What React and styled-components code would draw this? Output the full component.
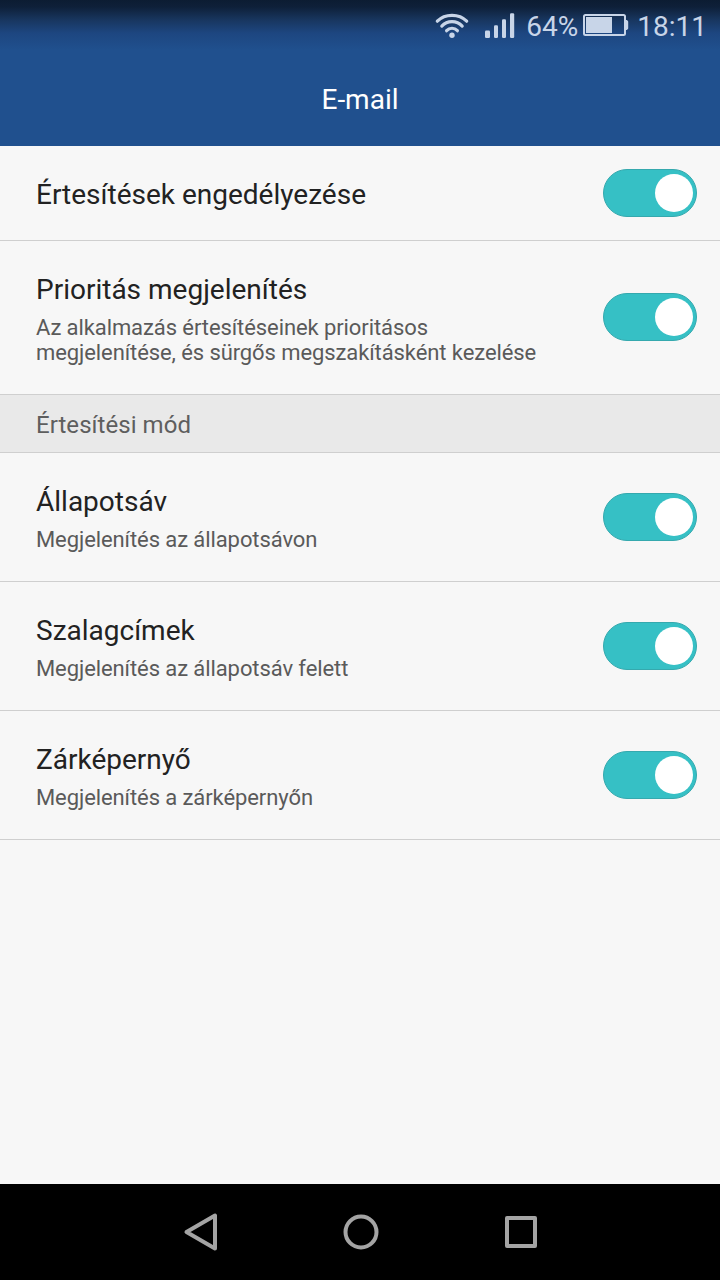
import React from 'react'
import styled, { createGlobalStyle } from 'styled-components'

const GlobalStyle = createGlobalStyle`
  * {
    box-sizing: border-box;
  }

  body {
    margin: 0;
    background: #f7f7f7;
    font-family: Roboto, 'Noto Sans', sans-serif;
  }
`

const Screen = styled.div`
  display: flex;
  flex-direction: column;
  width: 720px;
  height: 1280px;
  overflow: hidden;
  background: #f7f7f7;
`

const Header = styled.header`
  height: 146px;
  background: linear-gradient(
    to bottom,
    #0c1c32 0,
    #0e2039 7px,
    #18365f 20px,
    #1d4680 33px,
    #20508e 50px
  );
`

const StatusBar = styled.div`
  display: flex;
  align-items: center;
  justify-content: flex-end;
  height: 50px;
  padding: 4px 13px 0 0;
  color: #c8d5e8;
  font-size: 28px;
  line-height: 50px;
`

const StatusIcon = styled.svg`
  flex: none;
  margin-right: ${({ $gap }) => $gap}px;
  margin-bottom: ${({ $lift = 2 }) => $lift}px;
`

const Percent = styled.span`
  width: 57px;
`

const Title = styled.h1`
  margin: 0;
  padding-top: 1px;
  color: #fff;
  font-size: 28px;
  font-weight: 400;
  line-height: 98px;
  text-align: center;
`

const List = styled.main`
  flex: 1;
`

const Row = styled.div`
  display: flex;
  align-items: center;
  justify-content: space-between;
  height: ${({ $height }) => $height}px;
  padding: 0 23px 0 36px;
  border-bottom: 1px solid #cfcfcf;
`

const Texts = styled.div`
  padding-top: ${({ $single }) => ($single ? 4 : 2)}px;
`

const Label = styled.div`
  color: #222;
  font-size: 28px;
  line-height: 34px;
`

const Summary = styled.div`
  margin-top: 8px;
  color: #5a5a5a;
  font-size: 22px;
  letter-spacing: -0.09px;
  line-height: 25px;
  white-space: pre-line;
`

const SectionTitle = styled.div`
  height: 58px;
  padding: 2px 36px 0;
  background: #e9e9e9;
  border-bottom: 1px solid #cfcfcf;
  color: #5e5e5e;
  font-size: 24px;
  letter-spacing: 0.05px;
  line-height: 56px;
`

const Toggle = styled.div`
  display: flex;
  align-items: center;
  justify-content: flex-end;
  flex: none;
  width: 94px;
  height: 48px;
  margin-bottom: 1px;
  padding-right: 3px;
  border: 1px solid #35a9ae;
  border-radius: 24px;
  background: #36c0c5;
`

const Knob = styled.div`
  width: 38px;
  height: 38px;
  border-radius: 50%;
  background: #fff;
`

const NavBar = styled.nav`
  height: 96px;
  background: #000;
`

function SettingRow({ height, label, summary }) {
  return (
    <Row $height={height}>
      <Texts $single={!summary}>
        <Label>{label}</Label>
        {summary && <Summary>{summary}</Summary>}
      </Texts>
      <Toggle>
        <Knob />
      </Toggle>
    </Row>
  )
}

export default function App() {
  return (
    <Screen>
      <GlobalStyle />
      <Header>
        <StatusBar>
          {/* wifi */}
          <StatusIcon $gap={15} width="36" height="26" viewBox="0 0 36 26" fill="none" stroke="#c8d5e8" strokeWidth="3.2" strokeLinecap="round">
            <path d="M3.300 8.200C11 0.300 25 0.300 32.700 8.200M7.800 13.100c5.500-6 14.900-6 20.400 0M12.600 17.700c3-3.300 7.800-3.300 10.800 0" />
            <circle cx="18" cy="22.300" r="2.700" fill="#c8d5e8" stroke="none" />
          </StatusIcon>

          {/* signal */}
          <StatusIcon $gap={11} width="30" height="26" viewBox="0 0 30 26" fill="#c8d5e8">
            <rect x="0" y="17.500" width="5" height="7.500" rx="1.200" />
            <rect x="9" y="12.200" width="4" height="12.800" rx="1.200" />
            <rect x="17" y="6.200" width="4" height="18.800" rx="1.200" />
            <rect x="25" y="0.200" width="4.200" height="24.800" rx="1.200" />
          </StatusIcon>

          <Percent>64%</Percent>

          {/* battery */}
          <StatusIcon $gap={8} $lift={4} width="46" height="22" viewBox="0 0 46 22" fill="#c8d5e8">
            <rect x="1" y="1" width="41" height="20" rx="1.500" fill="none" stroke="#c8d5e8" strokeWidth="2" />
            <path d="M3 3h26v16H3zM42.500 6h1.500l1.200 1.500v7L44 16h-1.500z" />
          </StatusIcon>

          <span>18:11</span>
        </StatusBar>
        <Title>E-mail</Title>
      </Header>

      <List>
        <SettingRow height={95} label="Értesítések engedélyezése" />
        <SettingRow
          height={154}
          label="Prioritás megjelenítés"
          summary={'Az alkalmazás értesítéseinek prioritásos\nmegjelenítése, és sürgős megszakításként kezelése'}
        />
        <SectionTitle>Értesítési mód</SectionTitle>
        <SettingRow height={129} label="Állapotsáv" summary="Megjelenítés az állapotsávon" />
        <SettingRow height={129} label="Szalagcímek" summary="Megjelenítés az állapotsáv felett" />
        <SettingRow height={129} label="Zárképernyő" summary="Megjelenítés a zárképernyőn" />
      </List>

      <NavBar>
        <svg width="720" height="96" viewBox="0 0 720 96" fill="none" stroke="#a4a4a4" strokeWidth="4" strokeLinejoin="round">
          <path d="M215 31.500v33L186.500 48z" />
          <circle cx="361" cy="48" r="15.500" />
          <rect x="507" y="34" width="28" height="28" />
        </svg>
      </NavBar>
    </Screen>
  )
}
